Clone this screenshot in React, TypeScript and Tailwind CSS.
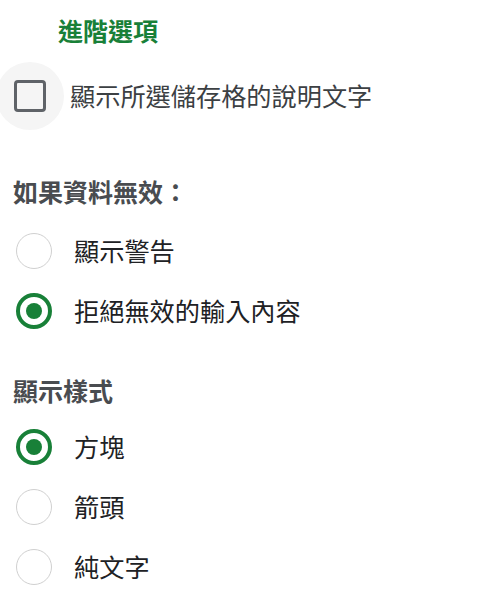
import { useState } from 'react';

const invalidOptions = ['顯示警告', '拒絕無效的輸入內容'];
const styleOptions = ['方塊', '箭頭', '純文字'];

function Radio({ checked }: { checked: boolean }) {
  return checked ? (
    <span className="flex h-[36px] w-[36px] shrink-0 items-center justify-center rounded-full border-[4px] border-[#188038]">
      <span className="h-[16px] w-[16px] rounded-full bg-[#188038]" />
    </span>
  ) : (
    <span className="h-[36px] w-[36px] shrink-0 rounded-full border-[1.5px] border-[#d0d0d0]" />
  );
}

function RadioRow({ label, checked, onClick }: { label: string; checked: boolean; onClick: () => void }) {
  return (
    <button onClick={onClick} className="flex h-[60px] w-full items-center gap-[22px] pl-[16px] text-left">
      <Radio checked={checked} />
      <span className="text-[25.2px] text-[#202124]">{label}</span>
    </button>
  );
}

export default function App() {
  const [showHelp, setShowHelp] = useState(false);
  const [invalid, setInvalid] = useState(1);
  const [display, setDisplay] = useState(0);

  return (
    <div className="h-[608px] w-[500px] bg-white font-['Noto_Sans_CJK_TC','Noto_Sans',sans-serif]">
      {/* Title */}
      <div className="flex h-[62px] items-center pl-[58px]">
        <h1 className="text-[25px] font-bold text-[#188038]">進階選項</h1>
      </div>

      {/* Checkbox */}
      <button onClick={() => setShowHelp(!showHelp)} className="flex h-[68px] w-full items-center text-left">
        <span className="ml-[-4px] flex h-[68px] w-[68px] shrink-0 items-center justify-center rounded-full bg-[#f5f5f5]">
          <span className="h-[32px] w-[32px] rounded-[4px] border-[3px] border-[#5f6368]" />
        </span>
        <span className="ml-[6px] text-[25.2px] text-[#3c4043]">顯示所選儲存格的說明文字</span>
      </button>

      {/* If data is invalid */}
      <div className="mt-[37px] flex h-[50px] items-center pl-[13px]">
        <h2 className="text-[25px] font-bold text-[#494c50]">如果資料無效：</h2>
      </div>
      <div className="mt-[4px]">
        {invalidOptions.map((opt, i) => (
          <RadioRow key={opt} label={opt} checked={invalid === i} onClick={() => setInvalid(i)} />
        ))}
      </div>

      {/* Display style */}
      <div className="mt-[25px] flex h-[50px] items-center pl-[13px]">
        <h2 className="text-[25px] font-bold text-[#494c50]">顯示樣式</h2>
      </div>
      <div className="mt-[1px]">
        {styleOptions.map((opt, i) => (
          <RadioRow key={opt} label={opt} checked={display === i} onClick={() => setDisplay(i)} />
        ))}
      </div>
    </div>
  );
}
